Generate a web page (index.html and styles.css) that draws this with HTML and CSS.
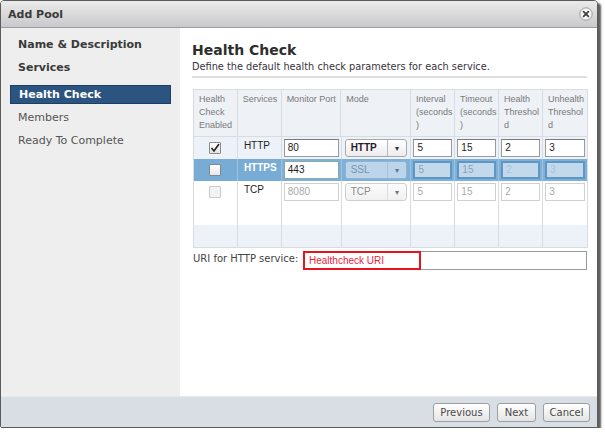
FILE: index.html
```html
<!DOCTYPE html>
<html>
<head>
<meta charset="utf-8">
<link rel="stylesheet" href="styles.css">
</head>
<body>
<div class="window">
  <div class="titlebar">
    <span class="title">Add Pool</span>
    <span class="close"><svg width="14" height="14" viewBox="0 0 14 14"><circle cx="7" cy="7" r="6.2" fill="#f4f4f4" stroke="#9a9a9a" stroke-width="1"/><path d="M4.6 4.6 L9.4 9.4 M9.4 4.6 L4.6 9.4" stroke="#444" stroke-width="1.8" stroke-linecap="round"/></svg></span>
  </div>
  <div class="main">
    <div class="nav">
      <div class="nav-item done">Name &amp; Description</div>
      <div class="nav-item done">Services</div>
      <div class="nav-item active">Health Check</div>
      <div class="nav-item">Members</div>
      <div class="nav-item">Ready To Complete</div>
    </div>
    <div class="content">
      <h1 class="heading">Health Check</h1>
      <div class="sub">Define the default health check parameters for each service.</div>
      <div class="divider"></div>
      <div class="grid">
        <div class="row head">
          <div class="c c1">Health<br>Check<br>Enabled</div>
          <div class="c c2">Services</div>
          <div class="c c3">Monitor Port</div>
          <div class="c c4">Mode</div>
          <div class="c c5">Interval<br>(seconds<br>)</div>
          <div class="c c6">Timeout<br>(seconds<br>)</div>
          <div class="c c7">Health<br>Threshol<br>d</div>
          <div class="c c8">Unhealth<br>Threshol<br>d</div>
        </div>
        <div class="row r-tint">
          <div class="c c1"><span class="cb checked"><svg width="10" height="10" viewBox="0 0 10 10"><path d="M1.5 5 L4 8 L9 1" fill="none" stroke="#222" stroke-width="1.6"/></svg></span></div>
          <div class="c c2 svc">HTTP</div>
          <div class="c c3"><span class="inp">80</span></div>
          <div class="c c4"><span class="sel"><span class="sv bold">HTTP</span><span class="arr">▾</span></span></div>
          <div class="c c5"><span class="inp">5</span></div>
          <div class="c c6"><span class="inp">15</span></div>
          <div class="c c7"><span class="inp">2</span></div>
          <div class="c c8"><span class="inp">3</span></div>
        </div>
        <div class="row r-sel">
          <div class="c c1 hl"><span class="cb"></span></div>
          <div class="c c2 svc hl">HTTPS</div>
          <div class="c c3"><span class="inp">443</span></div>
          <div class="c c4"><span class="sel"><span class="sv">SSL</span><span class="arr">▾</span></span></div>
          <div class="c c5"><span class="inp">5</span></div>
          <div class="c c6"><span class="inp">15</span></div>
          <div class="c c7"><span class="inp faint">2</span></div>
          <div class="c c8"><span class="inp faint">3</span></div>
        </div>
        <div class="row r-dis">
          <div class="c c1"><span class="cb"></span></div>
          <div class="c c2 svc">TCP</div>
          <div class="c c3"><span class="inp">8080</span></div>
          <div class="c c4"><span class="sel"><span class="sv">TCP</span><span class="arr">▾</span></span></div>
          <div class="c c5"><span class="inp">5</span></div>
          <div class="c c6"><span class="inp">15</span></div>
          <div class="c c7"><span class="inp">2</span></div>
          <div class="c c8"><span class="inp">3</span></div>
        </div>
        <div class="row r-empty">
          <div class="c c1"></div><div class="c c2"></div><div class="c c3"></div><div class="c c4"></div><div class="c c5"></div><div class="c c6"></div><div class="c c7"></div><div class="c c8"></div>
        </div>
        <div class="row r-empty r-tint">
          <div class="c c1"></div><div class="c c2"></div><div class="c c3"></div><div class="c c4"></div><div class="c c5"></div><div class="c c6"></div><div class="c c7"></div><div class="c c8"></div>
        </div>
      </div>
      <div class="uri">
        <span class="uri-label">URI for HTTP service:</span>
        <span class="uri-field"><span class="uri-mark">Healthcheck URI</span></span>
      </div>
    </div>
  </div>
  <div class="footer">
    <button class="btn b-prev">Previous</button>
    <button class="btn b-next">Next</button>
    <button class="btn b-cancel">Cancel</button>
  </div>
</div>
</body>
</html>
```
FILE: styles.css
```css
* { box-sizing: border-box; }
html, body { margin: 0; padding: 0; background: #ffffff; }
body { font-family: "DejaVu Sans", Verdana, sans-serif; color: #333; }

.window {
  width: 598px;
  height: 428px;
  border: 1px solid #5a5a5a;
  border-radius: 4px 4px 2px 2px;
  box-shadow: 3px 3px 2px rgba(40,40,40,0.75);
  display: flex;
  flex-direction: column;
  overflow: hidden;
  background: #fff;
}

.titlebar {
  height: 27px;
  flex: none;
  background: linear-gradient(#ebebeb, #c9c9cc);
  border-bottom: 1px solid #9c9ca0;
  display: flex;
  align-items: center;
  justify-content: space-between;
  padding: 0 4px 0 7px;
}
.title { font-size: 11px; font-weight: bold; color: #3a3a3a; }
.close { display: flex; }

.main { flex: 1; display: flex; min-height: 0; }

.nav {
  width: 179px;
  flex: none;
  background: #eeeeee;
  padding: 5px 9px 0 9px;
}
.nav-item {
  height: 23px;
  line-height: 23px;
  font-size: 11px;
  color: #555;
  padding-left: 8px;
}
.nav-item.done { font-weight: bold; color: #3a3a3a; }
.nav-item.active {
  margin-top: 6px;
  margin-bottom: 2px;
  height: 19px;
  line-height: 17px;
  background: #2b5480;
  border: 1px solid #1f3f62;
  color: #fff;
  font-weight: bold;
}

.content { flex: 1; padding: 14px 10px 0 12px; }
.heading { margin: 0; font-size: 14px; line-height: 17px; font-weight: bold; color: #2e2e2e; }
.sub { font-size: 9.75px; line-height: 14px; color: #3a3340; margin-top: 1px; }
.divider { height: 2px; background: #dedede; margin-top: 2px; width: 395px; }

.grid {
  margin-top: 11px;
  margin-left: 1px;
  width: 395px;
  border: 1px solid #d7dce2;
  font-family: "Liberation Sans", Arial, sans-serif;
}
.row { display: flex; height: 22px; }
.row.head { height: 47px; background: #eef1f5; border-bottom: 1px solid #d7dce2; }
.c {
  border-right: 1px solid #d7dce2;
  display: flex;
  align-items: center;
  padding: 0 2px;
  font-size: 10px;
}
.c:last-child { border-right: none; }
.head .c {
  align-items: flex-start;
  font-size: 9px;
  line-height: 13px;
  color: #7a7a7a;
  padding: 3px 3px 0 5px;
}
.c1 { width: 44px; justify-content: center; }
.c2 { width: 44px; }
.c3 { width: 60px; }
.c4 { width: 70px; }
.c5 { width: 44px; }
.c6 { width: 44px; }
.c7 { width: 44px; }
.c8 { width: 44px; }
.head .c1 { justify-content: flex-start; }

.r-tint { background: #edf2f8; }
.svc { font-size: 10px; color: #222; padding-left: 6px; align-items: flex-start; padding-top: 3px; }

.cb {
  width: 12px; height: 12px;
  border: 1px solid #8c8c8c;
  background: linear-gradient(#ffffff, #e3e3e3);
  display: flex; align-items: center; justify-content: center;
  border-radius: 1px;
}

.inp {
  width: 100%;
  height: 18px;
  border: 1px solid #9a9a9a;
  border-top-color: #7a7a7a;
  background: #fff;
  font-size: 10px;
  line-height: 16px;
  padding-left: 3px;
  color: #222;
}
.sel {
  width: 100%;
  height: 18px;
  border: 1px solid #a8a8a8;
  border-radius: 3px;
  background: linear-gradient(#ffffff, #ececec);
  display: flex;
  font-size: 10px;
  color: #222;
}
.sv { flex: 1; line-height: 16px; padding-left: 5px; }
.sv.bold { font-weight: bold; color: #2a1a2a; }
.arr {
  width: 19px; border-left: 1px solid #b8b8b8;
  display: flex; align-items: center; justify-content: center;
  font-size: 8px; color: #333;
}
.c4 { padding: 0 3px 0 3px; }

.r-sel { background: #7fb1d8; }
.r-sel .c { border-right-color: #9cc3e2; }
.hl { background: #78acd5; }
.r-sel .svc { color: #fff; font-weight: bold; }
.r-sel .cb { background: linear-gradient(#ffffff, #e6e6e6); border-color: #7d8a95; }
.r-sel .c3 .inp { background: #fff; border-color: #8aa; }
.r-sel .c5 .inp, .r-sel .c6 .inp, .r-sel .c7 .inp, .r-sel .c8 .inp {
  background: #c2d9ec;
  border: 2px solid #5e97c4;
  color: #8aa3b6;
  line-height: 14px;
}
.r-sel .inp.faint { color: #aac3d6; }
.r-sel .sel { background: #bcd5ea; border-color: #8fb4d3; color: #7a94aa; }
.r-sel .arr { border-left-color: #a2c1da; color: #5a7388; }

.r-dis .cb { border-color: #c9c9c9; background: #f3f3f3; }
.r-dis .inp { border-color: #d0d0d0; color: #a9a9a9; background: #fff; }
.r-dis .sel { border-color: #cfcfcf; color: #8a8a8a; background: linear-gradient(#fcfcfc, #f1f1f1); }
.r-dis .arr { border-left-color: #dcdcdc; color: #777; }

.uri { display: flex; align-items: center; margin-top: 3px; margin-left: 1px; }
.uri-label { font-size: 10px; color: #444; width: 110px; margin-top: -5px; }
.uri-field {
  width: 284px; height: 19px;
  border: 1px solid #9a9a9a;
  background: #fff;
  display: flex;
}
.uri-mark {
  width: 118px; height: 19px;
  margin: -1px 0 0 -1px;
  border: 2px solid #e8141c;
  color: #ec1c3a;
  font-family: "Liberation Sans", Arial, sans-serif;
  font-size: 10px;
  line-height: 15px;
  padding-left: 4px;
}

.footer {
  height: 31px;
  flex: none;
  background: #d9dde4;
  border-top: 1px solid #e8eaee;
  display: flex;
  justify-content: flex-end;
  align-items: center;
  gap: 7px;
  padding: 1px 7px 0 0;
}
.btn {
  font-family: "DejaVu Sans", Verdana, sans-serif;
  font-size: 10px;
  color: #4a4a4a;
  height: 19px;
  padding: 0;
  border: 1px solid #9b9ea3;
  border-radius: 3px;
  background: linear-gradient(#ffffff, #e4e4e4);
}
.b-prev { width: 57px; }
.b-next { width: 39px; }
.b-cancel { width: 47px; }
```
